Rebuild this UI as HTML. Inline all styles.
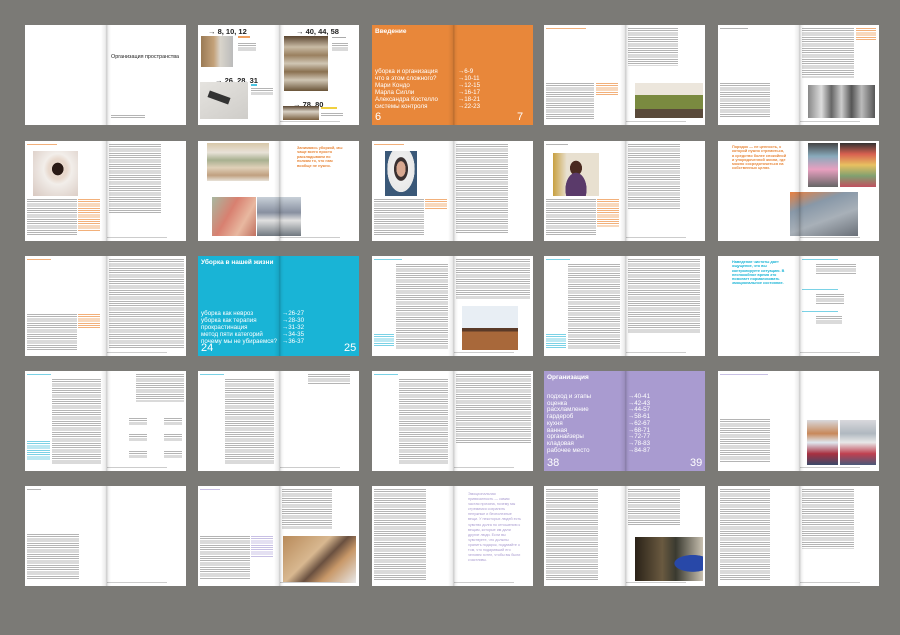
<!DOCTYPE html>
<html><head><meta charset="utf-8"><style>
*{margin:0;padding:0;box-sizing:border-box}
body{width:900px;height:635px;background:#7b7a76;position:relative;overflow:hidden;font-family:"Liberation Sans","DejaVu Sans",sans-serif}
.sp{position:absolute;width:161px;height:100px;background:#fff;overflow:hidden}
.sp::after{content:"";position:absolute;left:76px;top:0;width:10px;height:100%;background:linear-gradient(90deg,rgba(0,0,0,0),rgba(0,0,0,.08) 45%,rgba(0,0,0,.2) 55%,rgba(0,0,0,.05) 75%,rgba(0,0,0,0))}
.sp>*{position:absolute}
.tx{background:repeating-linear-gradient(180deg,#b4b4b4 0 1px,#fff 1px 2.2px)}
.to{background:repeating-linear-gradient(180deg,#f2b07a 0 1px,#fff 1px 2.2px)}
.tc{background:repeating-linear-gradient(180deg,#7ad2e6 0 1px,#fff 1px 2.2px)}
.tp{background:repeating-linear-gradient(180deg,#c8c0e4 0 1px,#fff 1px 2.2px)}
.ft{left:82px;bottom:3px;width:60px;height:1px;background:#ccc}
.big{color:#fff;font-size:6.2px;line-height:7px;white-space:nowrap}
.ar{font-size:7.5px;font-weight:bold;white-space:nowrap;color:#222}
</style></head><body>

<!-- Row 1 -->
<div class="sp" style="left:25px;top:25px">
 <div style="left:86px;top:29px;font-size:5.4px;color:#222;white-space:nowrap">Организация пространства</div>
 <div class="tx" style="left:86px;top:90px;width:34px;height:3px"></div>
</div>

<div class="sp" style="left:198px;top:25px">
 <div class="ar" style="left:10px;top:2px">→ 8, 10, 12</div>
 <div style="left:3px;top:11px;width:32px;height:31px;background:linear-gradient(90deg,#9a7a55,#c4a27a 40%,#d9d4cb 60%,#bbb)"></div>
 <div style="left:40px;top:11px;width:12px;height:2px;background:#f0a060"></div>
 <div class="tx" style="left:40px;top:18px;width:18px;height:8px"></div>
 <div class="ar" style="left:17px;top:51px">→ 26, 28, 31</div>
 <div style="left:2px;top:57px;width:48px;height:37px;background:linear-gradient(150deg,#e5e3df,#cfcdc9)"></div>
 <div style="left:10px;top:69px;width:22px;height:7px;background:#333;transform:rotate(20deg)"></div>
 <div style="left:53px;top:59px;width:6px;height:2px;background:#4cc3df"></div>
 <div class="tx" style="left:53px;top:63px;width:22px;height:7px"></div>
 <div class="ar" style="left:98px;top:2px">→ 40, 44, 58</div>
 <div style="left:86px;top:11px;width:44px;height:55px;background:linear-gradient(180deg,#5a4530,#c9bba5 20%,#9a8060 35%,#d0c6b4 50%,#8a7050 65%,#d0c6b4 80%,#6a5438)"></div>
 <div style="left:134px;top:12px;width:14px;height:1px;background:#aaa"></div>
 <div class="tx" style="left:134px;top:18px;width:16px;height:8px"></div>
 <div class="ar" style="left:95px;top:75px">→ 78, 80</div>
 <div style="left:85px;top:81px;width:36px;height:14px;background:linear-gradient(180deg,#5a4530,#d8d0c4 40%,#7a6040)"></div>
 <div style="left:123px;top:82px;width:16px;height:2px;background:#f0d040"></div>
 <div class="tx" style="left:123px;top:88px;width:22px;height:4px"></div>
 <div class="ft"></div>
</div>

<div class="sp" style="left:372px;top:25px;background:#e8873a">
 <div style="left:3px;top:3px;color:#fff;font-size:6.5px;font-weight:bold">Введение</div>
 <div class="big" style="left:3px;top:43px">уборка и организация<br>что в этом сложного?<br>Мари Кондо<br>Марла Силли<br>Александра Костелло<br>системы контроля</div>
 <div class="big" style="left:86px;top:43px">→6-9<br>→10-11<br>→12-15<br>→16-17<br>→18-21<br>→22-23</div>
 <div style="left:3px;top:86px;color:#fff;font-size:11px">6</div>
 <div style="left:145px;top:86px;color:#fff;font-size:11px">7</div>
</div>

<div class="sp" style="left:544px;top:25px">
 <div class="to" style="left:2px;top:3px;width:40px;height:1px"></div>
 <div class="tx" style="left:2px;top:58px;width:48px;height:36px"></div>
 <div class="to" style="left:52px;top:58px;width:22px;height:12px"></div>
 <div class="tx" style="left:84px;top:3px;width:50px;height:38px"></div>
 <div style="left:91px;top:58px;width:68px;height:35px;background:linear-gradient(180deg,#ece6dc 0 35%,#7a8a40 35% 75%,#5a4a3a 75%)"></div>
 <div class="ft"></div>
</div>

<div class="sp" style="left:718px;top:25px">
 <div class="tx" style="left:2px;top:3px;width:28px;height:1px"></div>
 <div class="tx" style="left:2px;top:58px;width:50px;height:35px"></div>
 <div class="tx" style="left:84px;top:3px;width:52px;height:50px"></div>
 <div class="to" style="left:138px;top:3px;width:20px;height:13px"></div>
 <div style="left:90px;top:60px;width:67px;height:33px;background:linear-gradient(90deg,#888,#ddd 20%,#666 35%,#ccc 50%,#555 65%,#bbb 80%,#555)"></div>
 <div class="ft"></div>
</div>

<!-- Row 2 -->
<div class="sp" style="left:25px;top:141px">
 <div class="to" style="left:2px;top:3px;width:30px;height:1px"></div>
 <div style="left:8px;top:10px;width:45px;height:45px;background:radial-gradient(ellipse at 55% 40%,#2a1a15 0 16%,#e8d8cc 17% 26%,#f2eeea 40%,#d8c8c0)"></div>
 <div class="tx" style="left:2px;top:58px;width:50px;height:36px"></div>
 <div class="to" style="left:53px;top:58px;width:22px;height:32px"></div>
 <div class="tx" style="left:84px;top:3px;width:52px;height:70px"></div>
 <div class="ft"></div>
</div>

<div class="sp" style="left:198px;top:141px">
 <div style="left:9px;top:2px;width:62px;height:38px;background:linear-gradient(180deg,#d8c8a8,#e8e2d8 25%,#a8b090 45%,#e0d0b8 65%,#c0a080 85%,#e8e2d8)"></div>
 <div style="left:14px;top:56px;width:44px;height:39px;background:linear-gradient(120deg,#a8b8a0,#d88070 40%,#e8b8a0 70%,#c07060)"></div>
 <div style="left:59px;top:56px;width:44px;height:39px;background:linear-gradient(180deg,#c8d0d8,#8890a0 40%,#e0e0e0 60%,#707880)"></div>
 <div style="left:99px;top:5px;width:48px;color:#e8873a;font-size:3.8px;line-height:4.4px;font-weight:bold">Занимаясь уборкой, мы чаще всего просто раскладываем по полкам то, что нам вообще не нужно.</div>
 <div class="ft"></div>
</div>

<div class="sp" style="left:372px;top:141px">
 <div class="to" style="left:2px;top:3px;width:30px;height:1px"></div>
 <div style="left:13px;top:10px;width:32px;height:45px;background:radial-gradient(ellipse at 50% 40%,#d8a890 0 20%,#3a3030 21% 30%,#eee 32%,#e8e8e8 60%,#3a5878 61%)"></div>
 <div class="tx" style="left:2px;top:58px;width:50px;height:36px"></div>
 <div class="to" style="left:53px;top:58px;width:22px;height:10px"></div>
 <div class="tx" style="left:84px;top:3px;width:52px;height:90px"></div>
</div>

<div class="sp" style="left:544px;top:141px">
 <div class="tx" style="left:2px;top:3px;width:22px;height:1px"></div>
 <div style="left:9px;top:12px;width:46px;height:43px;background:radial-gradient(ellipse at 50% 85%,#5a3a6a 0 32%,transparent 33%),radial-gradient(ellipse at 50% 35%,#4a2a20 0 18%,transparent 19%),linear-gradient(90deg,#c8a040,#e8e0d0 30%,#e8e0d0)"></div>
 <div class="tx" style="left:2px;top:58px;width:50px;height:36px"></div>
 <div class="to" style="left:53px;top:58px;width:22px;height:28px"></div>
 <div class="tx" style="left:84px;top:3px;width:52px;height:65px"></div>
 <div class="ft"></div>
</div>

<div class="sp" style="left:718px;top:141px">
 <div style="left:14px;top:4px;width:55px;color:#e8873a;font-size:3.8px;line-height:4.3px;font-weight:bold">Порядок — не ценность, к которой нужно стремиться, а средство более спокойной и упорядоченной жизни, где можно сосредоточиться на собственных целях.</div>
 <div style="left:90px;top:2px;width:30px;height:44px;background:linear-gradient(180deg,#444,#8ab 30%,#e8a0c0 60%,#666)"></div>
 <div style="left:122px;top:2px;width:36px;height:44px;background:linear-gradient(180deg,#333,#d86050 25%,#e8c060 50%,#80a070 75%,#c05060)"></div>
 <div style="left:72px;top:51px;width:68px;height:44px;background:linear-gradient(160deg,#e88040,#8898a8 30%,#a8b0b8 60%,#6a7078)"></div>
 <div class="ft"></div>
</div>

<!-- Row 3 -->
<div class="sp" style="left:25px;top:256px">
 <div class="to" style="left:2px;top:3px;width:24px;height:1px"></div>
 <div class="tx" style="left:2px;top:58px;width:50px;height:36px"></div>
 <div class="to" style="left:53px;top:58px;width:22px;height:14px"></div>
 <div class="tx" style="left:84px;top:3px;width:75px;height:90px"></div>
 <div class="ft"></div>
</div>

<div class="sp" style="left:198px;top:256px;background:#19b4d6">
 <div style="left:3px;top:3px;color:#fff;font-size:6.5px;font-weight:bold;white-space:nowrap">Уборка в нашей жизни</div>
 <div class="big" style="left:3px;top:54px">уборка как невроз<br>уборка как терапия<br>прокрастинация<br>метод пяти категорий<br>почему мы не убираемся?</div>
 <div class="big" style="left:84px;top:54px">→26-27<br>→28-30<br>→31-32<br>→34-35<br>→36-37</div>
 <div style="left:3px;top:86px;color:#fff;font-size:11px">24</div>
 <div style="left:146px;top:86px;color:#fff;font-size:11px">25</div>
</div>

<div class="sp" style="left:372px;top:256px">
 <div class="tc" style="left:2px;top:3px;width:28px;height:1px"></div>
 <div class="tx" style="left:24px;top:8px;width:52px;height:86px"></div>
 <div class="tc" style="left:2px;top:78px;width:20px;height:12px"></div>
 <div class="tx" style="left:84px;top:3px;width:74px;height:40px"></div>
 <div style="left:90px;top:50px;width:56px;height:44px;background:linear-gradient(180deg,#e8eef4 0 50%,#5a3a28 50% 58%,#a8683a 58%)"></div>
 <div class="ft"></div>
</div>

<div class="sp" style="left:544px;top:256px">
 <div class="tc" style="left:2px;top:3px;width:24px;height:1px"></div>
 <div class="tx" style="left:24px;top:8px;width:52px;height:86px"></div>
 <div class="tc" style="left:2px;top:78px;width:20px;height:14px"></div>
 <div class="tx" style="left:84px;top:3px;width:72px;height:75px"></div>
 <div class="ft"></div>
</div>

<div class="sp" style="left:718px;top:256px">
 <div style="left:14px;top:4px;width:55px;color:#19b4d6;font-size:3.8px;line-height:4.3px;font-weight:bold">Наведение чистоты дает ощущение, что вы контролируете ситуацию. В неспокойное время это помогает нормализовать эмоциональное состояние.</div>
 <div class="tc" style="left:84px;top:3px;width:36px;height:1px"></div>
 <div class="tx" style="left:98px;top:8px;width:40px;height:10px"></div>
 <div class="tc" style="left:84px;top:33px;width:36px;height:1px"></div>
 <div class="tx" style="left:98px;top:38px;width:28px;height:10px"></div>
 <div class="tc" style="left:84px;top:55px;width:36px;height:1px"></div>
 <div class="tx" style="left:98px;top:60px;width:26px;height:8px"></div>
 <div class="ft"></div>
</div>

<!-- Row 4 -->
<div class="sp" style="left:25px;top:371px">
 <div class="tc" style="left:2px;top:3px;width:24px;height:1px"></div>
 <div class="tx" style="left:27px;top:8px;width:49px;height:86px"></div>
 <div class="tc" style="left:2px;top:70px;width:23px;height:20px"></div>
 <div class="tx" style="left:111px;top:3px;width:48px;height:28px"></div>
 <div class="tx" style="left:104px;top:47px;width:18px;height:7px"></div>
 <div class="tx" style="left:139px;top:47px;width:18px;height:7px"></div>
 <div class="tx" style="left:104px;top:63px;width:18px;height:7px"></div>
 <div class="tx" style="left:139px;top:63px;width:18px;height:7px"></div>
 <div class="tx" style="left:104px;top:80px;width:18px;height:7px"></div>
 <div class="tx" style="left:139px;top:80px;width:18px;height:7px"></div>
 <div class="ft"></div>
</div>

<div class="sp" style="left:198px;top:371px">
 <div class="tc" style="left:2px;top:3px;width:24px;height:1px"></div>
 <div class="tx" style="left:27px;top:8px;width:49px;height:86px"></div>
 <div class="tx" style="left:110px;top:3px;width:42px;height:10px"></div>
 <div class="ft"></div>
</div>

<div class="sp" style="left:372px;top:371px">
 <div class="tc" style="left:2px;top:3px;width:24px;height:1px"></div>
 <div class="tx" style="left:27px;top:8px;width:49px;height:86px"></div>
 <div class="tx" style="left:84px;top:3px;width:75px;height:70px"></div>
 <div class="ft"></div>
</div>

<div class="sp" style="left:544px;top:371px;background:#a99bd0">
 <div style="left:3px;top:3px;color:#fff;font-size:6.5px;font-weight:bold">Организация</div>
 <div class="big" style="left:3px;top:23px;line-height:6.7px">подход и этапы<br>оценка<br>расхламление<br>гардероб<br>кухня<br>ванная<br>органайзеры<br>кладовая<br>рабочее место</div>
 <div class="big" style="left:84px;top:23px;line-height:6.7px">→40-41<br>→42-43<br>→44-57<br>→58-61<br>→62-67<br>→68-71<br>→72-77<br>→78-83<br>→84-87</div>
 <div style="left:3px;top:86px;color:#fff;font-size:11px">38</div>
 <div style="left:146px;top:86px;color:#fff;font-size:11px">39</div>
</div>

<div class="sp" style="left:718px;top:371px">
 <div class="tp" style="left:2px;top:3px;width:48px;height:1px"></div>
 <div class="tx" style="left:2px;top:48px;width:50px;height:44px"></div>
 <div style="left:89px;top:49px;width:31px;height:45px;background:linear-gradient(180deg,#d8d8dc,#c8885a 30%,#e0e8f0 50%,#a83040 75%,#3a4a6a)"></div>
 <div style="left:122px;top:49px;width:36px;height:45px;background:linear-gradient(180deg,#d8d8dc,#b0b8c0 30%,#e8e8e8 50%,#c04050 75%,#4a5a7a)"></div>
 <div class="ft"></div>
</div>

<!-- Row 5 -->
<div class="sp" style="left:25px;top:486px">
 <div class="tx" style="left:2px;top:3px;width:14px;height:1px"></div>
 <div class="tx" style="left:2px;top:48px;width:52px;height:46px"></div>
 <div class="ft"></div>
</div>

<div class="sp" style="left:198px;top:486px">
 <div class="tp" style="left:2px;top:3px;width:20px;height:1px"></div>
 <div class="tx" style="left:2px;top:50px;width:50px;height:44px"></div>
 <div class="tp" style="left:53px;top:50px;width:22px;height:22px"></div>
 <div class="tx" style="left:84px;top:3px;width:50px;height:40px"></div>
 <div style="left:85px;top:50px;width:73px;height:47px;background:linear-gradient(135deg,#b88a5a,#d8b890 40%,#6a5040 55%,#c89868 70%,#e8e8e8)"></div>
 <div class="ft"></div>
</div>

<div class="sp" style="left:372px;top:486px">
 <div class="tx" style="left:2px;top:3px;width:52px;height:91px"></div>
 <div style="left:96px;top:6px;width:54px;color:#a99bd0;font-size:3.7px;line-height:5.1px">Эмоциональная привязанность — самая частая причина, почему мы стремимся сохранить ненужные и бесполезные вещи. У некоторых людей есть чувство долга по отношению к вещам, которые им дали другие люди. Если вы чувствуете, что должны хранить подарок, подумайте о том, что подаривший его человек хотел, чтобы вы были счастливы.</div>
 <div class="ft"></div>
</div>

<div class="sp" style="left:544px;top:486px">
 <div class="tx" style="left:2px;top:3px;width:52px;height:91px"></div>
 <div class="tx" style="left:84px;top:3px;width:52px;height:36px"></div>
 <div style="left:91px;top:51px;width:68px;height:44px;background:radial-gradient(ellipse at 85% 60%,#2848a8 0 22%,transparent 23%),linear-gradient(90deg,#2a2218,#6a5a40 40%,#3a3a30 60%,#c8c0b0)"></div>
 <div class="ft"></div>
</div>

<div class="sp" style="left:718px;top:486px">
 <div class="tx" style="left:2px;top:3px;width:50px;height:91px"></div>
 <div class="tx" style="left:84px;top:3px;width:52px;height:60px"></div>
 <div class="ft"></div>
</div>

</body></html>
